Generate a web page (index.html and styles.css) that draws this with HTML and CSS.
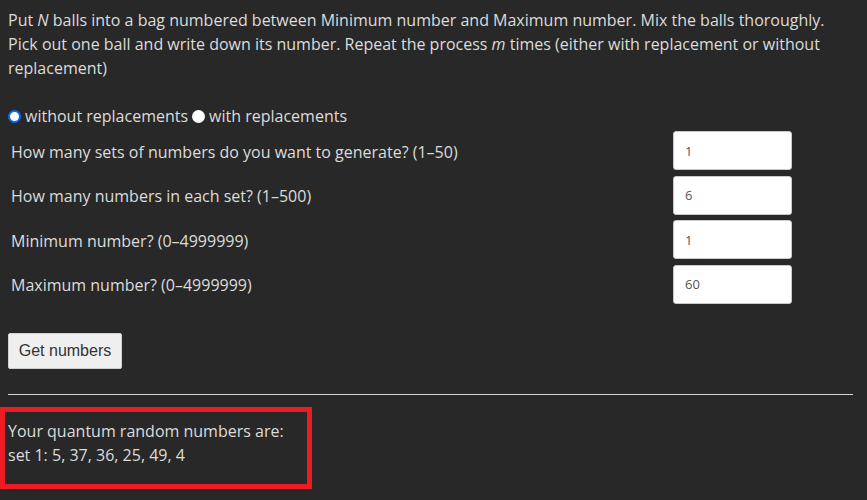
FILE: index.html
```html
<!DOCTYPE html>
<html>
<head>
<meta charset="utf-8">
<link rel="stylesheet" href="styles.css">
</head>
<body>
<p class="intro">Put <i>N</i> balls into a bag numbered between Minimum number and Maximum number. Mix the balls thoroughly. Pick out one ball and write down its number. Repeat the process <i>m</i> times (either with replacement or without replacement)</p>
<div class="radios">
  <label class="radio"><input type="radio" name="mode" checked><span>without replacements</span></label>
  <label class="radio"><input type="radio" name="mode"><span>with replacements</span></label>
</div>
<div class="form">
  <label class="lbl">How many sets of numbers do you want to generate? (1–50)</label>
  <input class="num" type="text" value="1">
  <label class="lbl">How many numbers in each set? (1–500)</label>
  <input class="num" type="text" value="6">
  <label class="lbl">Minimum number? (0–4999999)</label>
  <input class="num" type="text" value="1">
  <label class="lbl">Maximum number? (0–4999999)</label>
  <input class="num" type="text" value="60">
</div>
<button class="btn">Get numbers</button>
<hr class="rule">
<div class="result">
  <div>Your quantum random numbers are:</div>
  <div>set 1: 5, 37, 36, 25, 49, 4</div>
</div>
</body>
</html>
```
FILE: styles.css
```css
html, body {
  background: #282828;
}
body {
  margin: 0;
  padding: 8px 0 0 0;
  font-family: "Open Sans", "Noto Sans", sans-serif;
  font-size: 16px;
  line-height: 24px;
  color: #dcdcdc;
}
.intro {
  margin: 0 30px 0 8px;
}
.radios {
  margin: 24px 0 0 8px;
  display: flex;
  align-items: center;
  height: 24px;
}
.radio {
  display: flex;
  align-items: center;
  margin-right: 4px;
}
.radio input {
  -webkit-appearance: none;
  appearance: none;
  margin: 0 4px 0 0;
  width: 13px;
  height: 13px;
  border-radius: 50%;
  background: #fff;
  border: none;
  box-sizing: border-box;
}
.radio input:checked {
  border: 2px solid #0b6cf2;
  background: #fff;
}
.form {
  margin: 3px 0 0 8px;
  width: 784px;
  display: grid;
  grid-template-columns: 1fr 119px;
  row-gap: 5.67px;
  align-items: center;
}
.lbl {
  padding-left: 3px;
  padding-top: 2px;
}
.num {
  box-sizing: border-box;
  width: 119px;
  height: 39px;
  margin: 0;
  border: 1px solid #c8c8c8;
  border-radius: 3px;
  background: #fff;
  padding: 0 11px;
  font-family: "Open Sans", "Noto Sans", sans-serif;
  font-size: 13px;
  color: #555;
  outline: none;
}
.btn {
  display: block;
  margin: 29px 0 0 8px;
  width: 114px;
  height: 36px;
  box-sizing: border-box;
  background: #efefef;
  border: 1px solid #d0d0d0;
  border-radius: 2px;
  font-family: "Liberation Sans", Arial, sans-serif;
  font-size: 16px;
  color: #333;
  padding: 0;
}
.rule {
  margin: 25px 14px 0 8px;
  border: none;
  border-top: 1px solid #d6d6d6;
  height: 0;
}
.result {
  margin-top: 12px;
  width: 312px;
  height: 82px;
  box-sizing: border-box;
  border: 5px solid #ed1c24;
  padding: 7px 0 0 3px;
}
```
